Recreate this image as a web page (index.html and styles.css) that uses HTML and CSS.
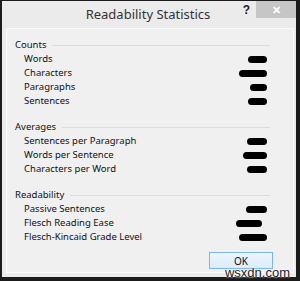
FILE: index.html
```html
<!DOCTYPE html>
<html lang="en">
<head>
<meta charset="UTF-8" />
<title>Readability Statistics</title>
<link rel="stylesheet" href="styles.css">
</head>
<body>
<div class="window">
  <div class="titlebar">
    <div></div>
    <div class="title">Readability Statistics</div>
    <div class="controls">
      <span class="help">?</span>
      <span class="close">&#x2715;</span>
    </div>
  </div>

  <div class="panel">
    <div class="group">
      <div class="heading"><span>Counts</span></div>
      <div class="row"><span>Words</span><span class="blob" style="width:19px"></span></div>
      <div class="row"><span>Characters</span><span class="blob" style="width:28px"></span></div>
      <div class="row"><span>Paragraphs</span><span class="blob" style="width:17px"></span></div>
      <div class="row"><span>Sentences</span><span class="blob" style="width:19px"></span></div>
    </div>

    <div class="group">
      <div class="heading"><span>Averages</span></div>
      <div class="row"><span>Sentences per Paragraph</span><span class="blob" style="width:20px"></span></div>
      <div class="row"><span>Words per Sentence</span><span class="blob" style="width:24px"></span></div>
      <div class="row"><span>Characters per Word</span><span class="blob" style="width:20px"></span></div>
    </div>

    <div class="group">
      <div class="heading"><span>Readability</span></div>
      <div class="row"><span>Passive Sentences</span><span class="blob" style="width:21px"></span></div>
      <div class="row"><span>Flesch Reading Ease</span><span class="blob shift" style="width:26px"></span></div>
      <div class="row"><span>Flesch-Kincaid Grade Level</span><span class="blob" style="width:28px"></span></div>
    </div>

    <div class="buttons">
      <button class="ok">OK</button>
    </div>
  </div>

  <div class="watermark">wsxdn.com</div>
</div>
</body>
</html>
```

FILE: styles.css
```css
body {
  margin: 0;
  font-family: "Noto Sans", "Open Sans", sans-serif;
}
.window {
  position: relative;
  width: 300px;
  height: 281px;
  box-sizing: border-box;
  background: #ebebeb;
  border: solid #1b1b1b;
  border-width: 1px 4px 4px 2px;
  padding: 0 0 0 4px;
  display: flex;
  flex-direction: column;
}
.titlebar {
  height: 27px;
  display: grid;
  grid-template-columns: 1fr auto 1fr;
  align-items: start;
  color: #333;
}
.title {
  font-size: 13px;
  line-height: 15px;
  padding-top: 6px;
  margin-left: -6px;
}
.controls {
  justify-self: end;
  display: flex;
  align-items: start;
}
.help {
  font-family: "Liberation Sans", sans-serif;
  font-weight: bold;
  font-size: 12px;
  line-height: 12px;
  color: #222;
  margin-top: 3px;
  margin-right: 6px;
}
.close {
  width: 40px;
  height: 17px;
  background: #c6c6c6;
  color: #fff;
  font-size: 11px;
  line-height: 17px;
  text-align: center;
  font-weight: bold;
}
.panel {
  width: 288px;
  height: 245px;
  box-sizing: border-box;
  background: #f0f0f0;
  border: 1px solid #fafafa;
  padding: 9px 23px 0 8px;
}
.group {
  font-size: 9.5px;
  line-height: 14px;
  color: #111;
  margin-bottom: 12px;
}
.heading {
  display: flex;
  align-items: center;
  gap: 6px;
}
.heading::after {
  content: "";
  flex: 1;
  height: 1px;
  background: #dcdcdc;
}
.row {
  display: flex;
  justify-content: space-between;
  align-items: center;
  padding-left: 9px;
  padding-right: 3px;
}
.blob {
  height: 7px;
  background: #000;
  border-radius: 4px;
}
.blob.shift {
  margin-right: 5px;
}
.buttons {
  display: flex;
  justify-content: flex-end;
  margin-top: -4px;
  margin-right: -3px;
}
.ok {
  width: 64px;
  height: 17px;
  padding: 0;
  font-family: inherit;
  font-size: 10px;
  color: #111;
  background: linear-gradient(#ecf4fc, #dcecfc);
  border: 1px solid #7eb4ea;
}
.watermark {
  position: absolute;
  right: 6px;
  bottom: -3px;
  font-family: "Liberation Sans", sans-serif;
  font-size: 13px;
  color: #222;
  text-shadow: 0 0 2px #fff, 0 0 2px #fff;
}
```
